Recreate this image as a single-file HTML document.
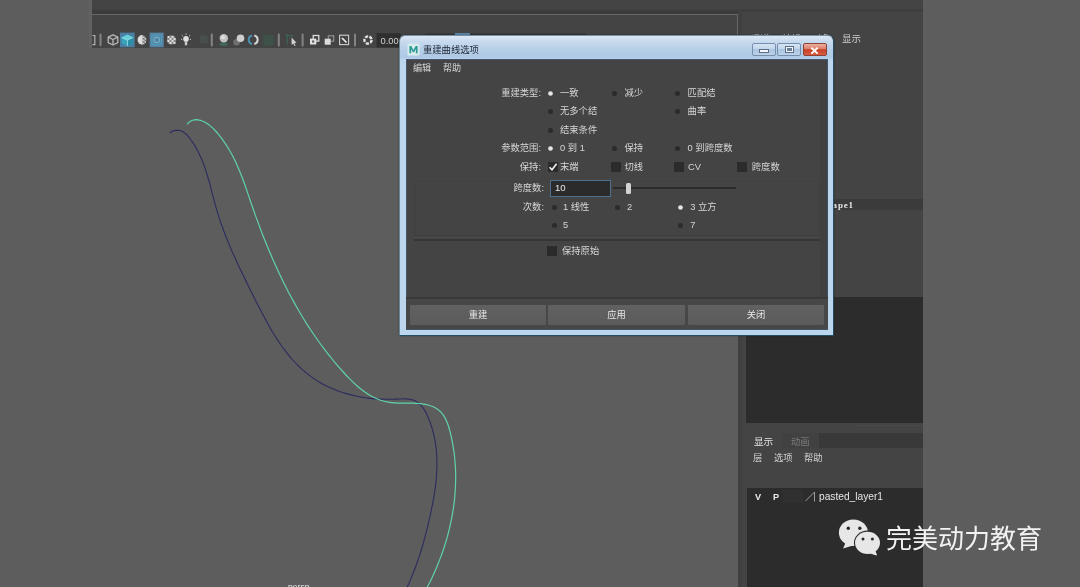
<!DOCTYPE html>
<html lang="zh-CN">
<head>
<meta charset="utf-8">
<title>重建曲线选项</title>
<style>
html,body{margin:0;padding:0;}
body{width:1080px;height:587px;overflow:hidden;background:#5d5d5d;position:relative;
  font-family:"Liberation Sans","Noto Sans CJK SC",sans-serif;font-size:9.3px;color:#d6d6d6;}
#stage{position:absolute;left:-10px;top:-10px;width:1100px;height:607px;background:#5d5d5d;filter:blur(0.4px);}
#in{position:absolute;left:10px;top:10px;width:1080px;height:587px;}
.a{position:absolute;}
.t{position:absolute;white-space:nowrap;line-height:12px;height:12px;}
.r{text-align:right;}
#topbar{left:92px;top:0;width:830.7px;height:11px;background:#444444;border-bottom:1px solid #3f3f3f;box-sizing:border-box;height:9.5px;}
#topline{left:92px;top:9.5px;width:646px;height:4.5px;background:linear-gradient(180deg,#414141 0,#3a3a3a 1.5px,#3c3c3c 100%);}
#tool{left:92px;top:14px;width:646px;height:34px;background:#444444;border-top:1.5px solid #676767;box-sizing:border-box;}
#rpanel{left:738px;top:9px;width:184.7px;height:578px;background:#444444;border-top:3px solid #3e3e3e;border-left:4px solid #404040;box-sizing:border-box;}
#vline{left:736.5px;top:14px;width:1.5px;height:30px;background:#676767;}
#rdark1{left:745.5px;top:297px;width:177.2px;height:125.5px;background:#2c2c2c;}
#rline{left:858px;top:424.6px;width:64.7px;height:1.6px;background:#4a4a4a;}
#lbox{left:783px;top:490px;width:20px;height:13px;background:#303030;}
#rdark2{left:747px;top:487.5px;width:175.7px;height:100px;background:#2c2c2c;}
#tabbar{left:782px;top:433px;width:140.7px;height:15px;background:#393939;}
#tab2{left:782px;top:433px;width:37px;height:15px;background:#414141;}
#lstrip{left:88.5px;top:0;width:3.5px;height:48px;background:#616161;}
#band{left:744px;top:198.5px;width:178.7px;height:11px;background:#3b3b3b;}
#dlg{left:399px;top:35px;width:435.3px;height:300.5px;box-sizing:border-box;border:1px solid #224f63;border-left-color:#6b8496;border-top-color:#7890a2;box-shadow:0 0 2px rgba(0,0,0,0.35);border-radius:6px 6px 1px 1px;
  background:linear-gradient(180deg,#dbe8f5 0,#c6d9ed 6px,#b8cfe8 13px,#aec9e5 21px,#bcd6ee 24px,#bcd6ee 100%);}
#dlgin{left:406.5px;top:59.5px;width:420.5px;height:269.5px;background:#444444;box-shadow:0 0 0 1px #43566c;}
.btn{position:absolute;top:305px;height:20px;background:linear-gradient(180deg,#616161,#5b5b5b);border-radius:1px;text-align:center;line-height:21px;color:#e6e6e6;}
.rd{position:absolute;width:5px;height:5px;border-radius:50%;background:#2b2b2b;}
.rd.on{background:#e6e6e6;transform:scale(0.94);}
.cb{position:absolute;width:10px;height:10px;background:#2b2b2b;}
.wb{position:absolute;top:43.2px;height:12.8px;box-sizing:border-box;border:1px solid #7590ae;border-radius:2px;background:linear-gradient(180deg,#d6e4f2 0,#c2d5ea 45%,#acc5e0 50%,#bcd2e9 100%);}
</style>
</head>
<body>
<div id="stage"><div id="in">
<div class="a" id="lstrip"></div>
<div class="a" id="topbar"></div>
<div class="a" id="topline"></div>
<div class="a" id="tool"></div>
<div class="a" id="rpanel"></div>
<div class="a" id="vline"></div>
<div class="a" id="band"></div>
<div class="a" id="rdark1"></div>
<div class="a" id="rdark2"></div>
<div class="a" id="rline"></div>
<div class="a" id="lbox"></div>
<div class="a" id="tabbar"></div>
<div class="a" id="tab2"></div>
<svg class="a" style="left:0;top:0" width="1080" height="587" viewBox="0 0 1080 587">
<path d="M169.7,133.0C170.2,132.8,171.4,131.8,172.3,131.3C173.2,130.9,174.2,130.6,175.1,130.4C176.0,130.2,177.0,130.2,177.9,130.2C178.8,130.3,179.7,130.4,180.6,130.7C181.4,130.9,182.2,131.3,183.0,131.7C183.7,132.2,184.4,132.7,185.1,133.3C185.8,133.8,186.5,134.5,187.2,135.1C187.8,135.8,188.4,136.5,189.0,137.3C189.6,138.0,190.2,138.8,190.7,139.5C191.3,140.3,191.9,141.1,192.4,141.9C192.9,142.7,193.4,143.4,193.9,144.2C194.4,145.0,194.9,145.8,195.4,146.6C195.9,147.4,195.9,147.2,196.8,149.1C197.7,150.9,199.7,154.8,201.0,157.7C202.3,160.7,203.5,163.7,204.5,166.7C205.6,169.8,206.6,172.9,207.5,176.0C208.5,179.1,209.3,182.2,210.2,185.3C211.0,188.5,211.8,191.6,212.6,194.8C213.5,197.9,214.3,201.0,215.1,204.1C216.0,207.3,216.8,210.3,217.8,213.4C218.7,216.5,219.7,219.5,220.7,222.5C221.8,225.5,222.9,228.5,224.0,231.5C225.1,234.5,226.2,237.4,227.4,240.3C228.6,243.3,229.8,246.2,231.1,249.1C232.3,252.0,233.6,254.9,234.9,257.8C236.2,260.7,237.6,263.6,238.9,266.5C240.3,269.4,241.7,272.3,243.1,275.1C244.5,278.0,245.9,280.9,247.3,283.8C248.7,286.7,250.2,289.6,251.6,292.5C253.1,295.4,254.5,298.4,256.0,301.3C257.5,304.2,259.0,307.2,260.5,310.1C262.0,313.0,263.5,315.9,265.1,318.8C266.7,321.7,268.2,324.6,269.9,327.4C271.5,330.2,273.2,333.0,274.9,335.8C276.6,338.5,278.4,341.3,280.2,343.9C282.1,346.6,283.9,349.2,285.9,351.7C287.8,354.2,289.8,356.7,291.9,359.0C294.0,361.4,296.1,363.7,298.4,365.9C300.6,368.1,302.9,370.2,305.3,372.2C307.7,374.2,310.2,376.1,312.8,377.9C315.3,379.6,318.0,381.3,320.8,382.9C323.5,384.4,326.3,385.9,329.2,387.2C332.1,388.5,335.1,389.8,338.1,390.9C341.1,392.0,344.2,393.0,347.3,393.9C350.4,394.8,353.6,395.5,356.8,396.2C360.0,396.9,363.3,397.4,366.5,397.9C369.8,398.3,373.1,398.7,376.4,398.9C379.7,399.2,383.0,399.3,386.4,399.3C389.7,399.4,393.1,399.2,396.3,399.1C399.6,399.0,403.0,398.6,406.0,398.9C409.1,399.1,412.0,399.4,414.6,400.6C417.2,401.7,419.5,403.6,421.5,405.8C423.5,408.0,425.1,411.0,426.7,413.9C428.2,416.9,429.4,420.2,430.5,423.4C431.6,426.6,432.6,429.8,433.4,433.0C434.2,436.3,434.8,439.5,435.3,442.7C435.8,445.9,436.2,449.1,436.5,452.3C436.7,455.5,436.9,458.7,436.9,461.9C437.0,465.1,436.9,468.3,436.7,471.5C436.6,474.7,436.3,477.9,436.0,481.1C435.7,484.3,435.3,487.4,434.8,490.6C434.4,493.8,433.8,497.0,433.3,500.1C432.7,503.3,432.1,506.4,431.4,509.6C430.8,512.7,430.1,515.9,429.4,519.0C428.7,522.1,428.0,525.3,427.2,528.4C426.4,531.5,425.6,534.6,424.8,537.7C424.0,540.8,423.1,543.9,422.2,547.0C421.3,550.0,420.3,553.1,419.3,556.1C418.3,559.2,417.3,562.2,416.2,565.2C415.1,568.3,413.9,571.3,412.7,574.3C411.5,577.2,410.3,580.2,409.0,583.2C407.6,586.1,405.5,590.5,404.8,592.0" fill="none" stroke="#2c2c60" stroke-width="1.1"/>
<path d="M187.2,124.4C187.5,124.0,188.5,122.7,189.3,122.1C190.0,121.4,190.8,120.9,191.7,120.6C192.5,120.2,193.3,120.0,194.2,119.8C195.0,119.7,195.9,119.7,196.8,119.7C197.7,119.8,198.6,120.0,199.4,120.2C200.3,120.4,201.2,120.7,202.0,121.0C202.9,121.3,203.7,121.7,204.6,122.1C205.4,122.6,206.2,123.0,207.0,123.5C207.7,124.0,208.5,124.6,209.3,125.1C210.0,125.7,210.7,126.3,211.5,126.9C212.2,127.6,212.9,128.2,213.6,128.9C214.2,129.6,214.9,130.3,215.6,131.0C216.2,131.7,216.2,131.5,217.5,133.2C218.9,134.9,221.7,138.4,223.6,141.1C225.5,143.8,227.3,146.5,228.9,149.3C230.6,152.1,232.1,154.9,233.6,157.8C235.0,160.6,236.4,163.5,237.6,166.5C238.9,169.4,240.1,172.3,241.3,175.3C242.5,178.3,243.6,181.3,244.7,184.3C245.7,187.3,246.8,190.3,247.8,193.4C248.9,196.4,249.9,199.4,250.9,202.5C252.0,205.5,253.0,208.5,254.1,211.6C255.2,214.6,256.2,217.6,257.4,220.6C258.5,223.6,259.6,226.7,260.7,229.7C261.9,232.7,263.0,235.7,264.2,238.7C265.4,241.6,266.6,244.6,267.8,247.6C269.1,250.6,270.3,253.5,271.6,256.5C272.9,259.4,274.2,262.4,275.5,265.3C276.8,268.3,278.2,271.2,279.5,274.1C280.9,277.0,282.3,279.9,283.7,282.8C285.2,285.7,286.6,288.5,288.1,291.4C289.6,294.2,291.1,297.1,292.7,299.9C294.2,302.7,295.8,305.5,297.4,308.3C299.0,311.1,300.6,313.9,302.3,316.7C304.0,319.4,305.7,322.2,307.4,324.9C309.2,327.6,311.0,330.3,312.8,333.0C314.6,335.7,316.4,338.3,318.3,341.0C320.2,343.6,322.1,346.2,324.1,348.8C326.0,351.4,328.0,354.0,330.1,356.5C332.1,359.1,334.2,361.6,336.3,364.1C338.4,366.6,340.6,369.1,342.8,371.5C345.0,374.0,347.2,376.4,349.5,378.7C351.8,381.1,354.2,383.4,356.6,385.5C359.0,387.6,361.5,389.6,364.1,391.5C366.6,393.3,369.3,395.0,372.0,396.5C374.8,397.9,377.6,399.2,380.5,400.2C383.5,401.2,386.5,401.9,389.7,402.4C392.8,402.9,396.1,403.0,399.4,403.1C402.7,403.2,406.1,403.1,409.4,403.1C412.8,403.2,416.2,403.2,419.5,403.5C422.7,403.9,426.1,404.3,429.0,405.2C432.0,406.1,434.9,407.2,437.3,408.9C439.7,410.5,441.7,412.7,443.4,415.1C445.1,417.5,446.3,420.4,447.5,423.3C448.7,426.2,449.5,429.5,450.3,432.7C451.1,435.8,451.8,439.1,452.4,442.3C453.0,445.6,453.5,448.8,454.0,452.0C454.4,455.3,454.8,458.5,455.0,461.8C455.3,465.0,455.5,468.2,455.6,471.5C455.7,474.7,455.7,478.0,455.6,481.2C455.6,484.5,455.4,487.7,455.2,490.9C455.0,494.1,454.7,497.4,454.4,500.6C454.0,503.8,453.6,507.0,453.1,510.2C452.6,513.4,452.0,516.6,451.4,519.7C450.7,522.9,450.0,526.1,449.3,529.2C448.5,532.3,447.7,535.5,446.8,538.6C445.9,541.7,445.0,544.7,444.0,547.8C442.9,550.9,441.9,553.9,440.8,556.9C439.6,559.9,438.5,562.9,437.2,565.9C436.0,568.8,434.7,571.8,433.4,574.7C432.1,577.6,430.7,580.5,429.3,583.3C427.8,586.2,425.6,590.4,424.9,591.8" fill="none" stroke="#5fd3a6" stroke-width="1.2"/>
</svg>
<div class="t" style="left:288px;top:580.5px;font-size:8.6px;color:#e8e8e8;">persp</div>
<div class="a" style="left:425px;top:32.5px;width:161px;height:4px;background:#3a3a3a;"></div>
<div class="a" style="left:455px;top:32.5px;width:15px;height:4px;background:#5a86a8;"></div>
<svg class="a" style="left:0;top:0" width="420" height="60" viewBox="0 0 420 60">
<!-- partial bracket icon -->
<path d="M92.5,35.5 H94.8 V44.6 H92.5" fill="none" stroke="#b4b4b4" stroke-width="1.2"/>
<!-- separators -->
<g stroke="#848484" stroke-width="2" stroke-linecap="round">
<path d="M100.5,34.6 V45.2"/><path d="M211.8,34.6 V45.6"/><path d="M278.8,34.6 V45.6"/><path d="M302.6,34.6 V45.6"/><path d="M355,34.6 V45.6"/>
</g>
<!-- wire cube -->
<g fill="none" stroke="#b4b4b4" stroke-width="1.35" stroke-linejoin="round">
<path d="M113,34.8 L117.8,37.1 V42.7 L113,45 L108.2,42.7 V37.1 Z"/><path d="M108.2,37.1 L113,39.5 L117.8,37.1 M113,39.5 V45"/>
</g>
<!-- shaded cube (active) -->
<rect x="120" y="32.6" width="14.7" height="14.7" fill="#4b7ea2"/>
<path d="M127.4,34.6 L133.2,37.4 V43.2 L127.4,46 L121.6,43.2 V37.4 Z" fill="#37a4b9"/>
<path d="M127.4,34.6 L133.2,37.4 L127.4,40.1 L121.6,37.4 Z" fill="#66cfda"/>
<path d="M127.4,40.1 L133.2,37.4 V43.2 L127.4,46 Z" fill="#2b8fa7"/>
<path d="M121.6,37.4 L127.4,40.1 L133.2,37.4 M127.4,40.1 V46" fill="none" stroke="#a6e3ea" stroke-width="0.8"/>
<!-- half sphere -->
<circle cx="141.7" cy="39.9" r="4.8" fill="#6f6f6f"/>
<path d="M142.6,35.1 A4.8,4.8 0 1 0 142.6,44.7 Z" fill="#dedede"/>
<g fill="#d0d0d0"><rect x="143" y="36.4" width="1.6" height="1.6"/><rect x="144.6" y="38" width="1.6" height="1.6"/><rect x="143" y="39.6" width="1.6" height="1.6"/><rect x="144.6" y="41.2" width="1.4" height="1.6"/><rect x="143" y="42.8" width="1.4" height="1.4"/></g>
<!-- textured (active) -->
<rect x="149.7" y="32.6" width="14" height="14.7" fill="#5783a8"/>
<rect x="151.9" y="35" width="9.6" height="9.8" rx="1.2" fill="none" stroke="#4ba6bb" stroke-width="1"/>
<rect x="154.1" y="37.3" width="5.2" height="5.2" rx="0.8" fill="none" stroke="#74c2cf" stroke-width="0.9"/>
<!-- checker circle -->
<circle cx="171.5" cy="40" r="4.7" fill="#868686"/>
<g fill="#dedede"><rect x="167.5" y="36" width="2" height="2"/><rect x="171.5" y="36" width="2" height="2"/><rect x="169.5" y="38" width="2" height="2"/><rect x="173.5" y="38" width="2" height="2"/><rect x="167.5" y="40" width="2" height="2"/><rect x="171.5" y="40" width="2" height="2"/><rect x="169.5" y="42" width="2" height="2"/><rect x="173.5" y="42" width="2" height="2"/></g>
<!-- light bulb -->
<circle cx="186" cy="38.9" r="2.8" fill="#e0e0e0"/>
<rect x="184.8" y="41.3" width="2.4" height="4" fill="#c8c8c8"/>
<g stroke="#d0d0d0" stroke-width="0.9"><path d="M186,33.4 V34.8"/><path d="M181.8,35.2 L183,36.3"/><path d="M190.2,35.2 L189,36.3"/><path d="M181,39.4 H182.2"/><path d="M191,39.4 H189.8"/></g>
<!-- dim icon -->
<rect x="199.6" y="35.6" width="8" height="7.6" fill="#48504c"/>
<!-- sphere w/ shadow -->
<ellipse cx="223.6" cy="44.2" rx="4.4" ry="1.8" fill="#3f6658"/>
<circle cx="223.8" cy="38.3" r="4.2" fill="#c2c2c2"/>
<circle cx="223" cy="37.2" r="2" fill="#dedede"/>
<!-- sphere 2 -->
<circle cx="236.6" cy="42.2" r="3.3" fill="#707070"/>
<circle cx="240.5" cy="38.2" r="3.8" fill="#cfcfcf"/>
<!-- ring: left blue, right white -->
<path d="M252.1,35.6 A4.3,4.3 0 0 0 252.1,44" fill="none" stroke="#4a8eae" stroke-width="2"/>
<path d="M254.3,35.6 A4.3,4.3 0 0 1 254.3,44" fill="none" stroke="#d6d6d6" stroke-width="2"/>
<!-- dim green -->
<rect x="263.2" y="34.6" width="10.4" height="11" fill="#3e5249"/>
<!-- select icon -->
<path d="M285.6,35.6 H293.6 M287.3,34 V44.5" fill="none" stroke="#3f6455" stroke-width="1.2"/>
<path d="M291.6,37.6 V45 L293.3,43.6 L294.5,46 L295.6,45.4 L294.4,43.1 L296.5,42.8 Z" fill="#d2d2d2"/>
<!-- overlapping squares 1 -->
<rect x="313.2" y="35.5" width="5.6" height="5.6" fill="none" stroke="#dcdcdc" stroke-width="1.3"/>
<rect x="310" y="38.6" width="6.3" height="5.9" fill="#e2e2e2"/>
<rect x="312.1" y="40.5" width="2.1" height="2.1" fill="#555"/>
<!-- overlapping squares 2 -->
<rect x="328.3" y="35.8" width="5.4" height="5.4" fill="none" stroke="#909090" stroke-width="1.2"/>
<rect x="324.7" y="38.7" width="6" height="6" fill="#dcdcdc"/>
<!-- square w/ diagonal -->
<rect x="339.6" y="35.2" width="9" height="9.4" fill="none" stroke="#cfcfcf" stroke-width="1.1"/>
<path d="M342,38 L346.5,42.5" stroke="#ececec" stroke-width="1.7"/>
<!-- gear ring -->
<circle cx="368" cy="40" r="3.6" fill="none" stroke="#e2e2e2" stroke-width="2.4" stroke-dasharray="3.2 1.3"/>
<!-- 0.00 -->
<rect x="376.5" y="33.2" width="24" height="14.3" fill="#2f2f2f"/>
<text x="380.6" y="43.6" font-family="Liberation Sans, sans-serif" font-size="9.3" fill="#d2d2d2">0.00</text>
</svg>

<div class="t" style="left:751px;top:32.5px;font-size:9.5px;color:#cfcfcf;">通道</div>
<div class="t" style="left:782px;top:32.5px;font-size:9.5px;color:#cfcfcf;">编辑</div>
<div class="t" style="left:812px;top:32.5px;font-size:9.5px;color:#cfcfcf;">对象</div>
<div class="t" style="left:842px;top:32.5px;font-size:9.5px;color:#cfcfcf;">显示</div>
<div class="t" style="left:832.6px;top:199px;font-family:'Liberation Serif',serif;font-size:9px;font-weight:bold;letter-spacing:0.8px;color:#e6e6e6;">ape1</div>
<div class="t" style="left:754px;top:436px;font-size:9.6px;color:#e6e6e6;">显示</div>
<div class="t" style="left:791px;top:436px;font-size:9.3px;color:#7a7a7a;">动画</div>
<div class="t" style="left:753px;top:452px;font-size:9.3px;color:#d2d2d2;">层</div>
<div class="t" style="left:774px;top:452px;font-size:9.3px;color:#d2d2d2;">选项</div>
<div class="t" style="left:804px;top:452px;font-size:9.3px;color:#d2d2d2;">帮助</div>
<div class="t" style="left:755px;top:491px;font-size:9.2px;font-weight:bold;color:#e8e8e8;">V</div>
<div class="t" style="left:773px;top:491px;font-size:9.2px;font-weight:bold;color:#e8e8e8;">P</div>
<svg class="a" style="left:804px;top:490px" width="14" height="13"><path d="M1.5,11 L10.5,2 L10.5,11.5" fill="none" stroke="#9a9a9a" stroke-width="1"/></svg>
<div class="t" style="left:819px;top:491px;font-size:10.2px;color:#e6e6e6;">pasted_layer1</div>
<svg class="a" style="left:836px;top:516px" width="48" height="42" viewBox="836 516 48 42">
<path d="M843.1,548.6 L845.6,542.6 L853,545.6 Z" fill="#e7e7e7"/>
<ellipse cx="853.4" cy="532.7" rx="14.5" ry="13.3" fill="#e7e7e7"/>
<path d="M877.1,555.7 L875.3,550 L868.6,553.6 Z" fill="#e7e7e7" stroke="#2c2c2c" stroke-width="0.6"/>
<ellipse cx="867.5" cy="542.8" rx="13.6" ry="12.2" fill="#2c2c2c"/>
<ellipse cx="867.5" cy="542.8" rx="12.5" ry="11.1" fill="#e7e7e7"/>
<path d="M876.9,555.3 L875.3,550.4 L869.4,553.3 Z" fill="#e7e7e7"/>
<circle cx="848.3" cy="528.3" r="1.7" fill="#2a2a2a"/><circle cx="859.8" cy="528.3" r="1.7" fill="#2a2a2a"/>
<circle cx="863" cy="538.9" r="1.5" fill="#2a2a2a"/><circle cx="872.4" cy="538.9" r="1.5" fill="#2a2a2a"/>
</svg>

<div class="t" style="left:886px;top:520px;height:38px;line-height:38px;font-size:26px;color:#f2f2f2;">完美动力教育</div>
<div class="a" id="dlg"></div>
<div class="a" id="dlgin"></div>
<svg class="a" style="left:407px;top:43px" width="13" height="13" viewBox="0 0 14 14"><rect x="0.5" y="0.5" width="13" height="13" rx="1.5" fill="#d7ecec"/><path d="M2.6,11 V3.2 H4.6 L7,7.6 L9.4,3.2 H11.4 V11 H9.5 V6.4 L7.6,9.9 H6.4 L4.5,6.4 V11 Z" fill="#2b9a94"/></svg>
<div class="t" style="left:423px;top:43.5px;font-size:9.3px;color:#1c2430;">重建曲线选项</div>
<div class="wb" style="left:752px;width:24px;"><div class="a" style="left:7.2px;top:5.6px;width:7.6px;height:2px;background:#f4f8fc;box-shadow:0 0 0 1px #5b6f86;"></div></div>
<div class="wb" style="left:777px;width:24px;"><div class="a" style="left:8px;top:3px;width:4.5px;height:3.2px;border:1px solid #f4f8fc;box-shadow:0 0 0 1px #5b6f86;background:#6b7f96;"></div></div>
<div class="wb" style="left:803px;width:24px;border-color:#8e4236;background:linear-gradient(180deg,#ebb0a2 0,#dd7c68 45%,#c93e24 52%,#d75e42 100%);"><svg class="a" style="left:6.2px;top:2.4px" width="9" height="7.4" viewBox="0 0 10 8"><path d="M1.5,0.8 L8.5,7.2 M8.5,0.8 L1.5,7.2" stroke="#ffffff" stroke-width="2.1" fill="none"/></svg></div>
<div class="t" style="left:413px;top:62px;font-size:9.1px;color:#d6d6d6;">编辑</div>
<div class="t" style="left:443px;top:62px;font-size:9.1px;color:#d6d6d6;">帮助</div>
<div class="a" style="left:414px;top:181px;width:406px;height:54.5px;box-sizing:border-box;border:1px solid rgba(0,0,0,0.07);border-top-color:rgba(0,0,0,0.03);border-bottom:1px solid rgba(0,0,0,0.10);"></div>
<div class="a" style="left:414px;top:235.5px;width:406px;height:3.7px;background:rgba(255,255,255,0.015);"></div>
<div class="a" style="left:414px;top:238.8px;width:406px;height:1.8px;background:rgba(0,0,0,0.2);"></div>
<div class="a" style="left:820px;top:80px;width:8px;height:218px;background:rgba(0,0,0,0.06);"></div>
<div class="a" style="left:406px;top:297px;width:422px;height:2px;background:#393939;"></div>
<div class="a" style="left:406px;top:299px;width:422px;height:30px;background:#474747;"></div>
<div class="t r" style="right:539.0px;top:86.7px;">重建类型:</div>
<div class="rd on" style="left:548.2px;top:90.5px;"></div>
<div class="t" style="left:560.0px;top:86.7px;">一致</div>
<div class="rd" style="left:611.8px;top:90.5px;"></div>
<div class="t" style="left:624.4px;top:86.7px;">减少</div>
<div class="rd" style="left:674.9px;top:90.5px;"></div>
<div class="t" style="left:687.6px;top:86.7px;">匹配结</div>
<div class="rd" style="left:548.2px;top:109.0px;"></div>
<div class="t" style="left:560.0px;top:105.2px;">无多个结</div>
<div class="rd" style="left:674.9px;top:109.0px;"></div>
<div class="t" style="left:687.6px;top:105.2px;">曲率</div>
<div class="rd" style="left:548.2px;top:127.5px;"></div>
<div class="t" style="left:560.0px;top:123.7px;">结束条件</div>
<div class="t r" style="right:539.0px;top:142.0px;">参数范围:</div>
<div class="rd on" style="left:548.2px;top:145.8px;"></div>
<div class="t" style="left:560.0px;top:142.0px;">0 到 1</div>
<div class="rd" style="left:611.8px;top:145.8px;"></div>
<div class="t" style="left:624.4px;top:142.0px;">保持</div>
<div class="rd" style="left:674.9px;top:145.8px;"></div>
<div class="t" style="left:687.6px;top:142.0px;">0 到跨度数</div>
<div class="t r" style="right:539.0px;top:160.7px;">保持:</div>
<div class="cb" style="left:547.5px;top:162.0px;"></div>
<svg class="a" style="left:547.5px;top:162.0px" width="10" height="10" viewBox="0 0 10 10"><path d="M1.6,5.2 L4,7.8 L8.6,1.8" fill="none" stroke="#f0f0f0" stroke-width="1.6"/></svg>
<div class="t" style="left:560.0px;top:160.7px;">末端</div>
<div class="cb" style="left:610.6px;top:162.0px;"></div>
<div class="t" style="left:624.4px;top:160.7px;">切线</div>
<div class="cb" style="left:673.7px;top:162.0px;"></div>
<div class="t" style="left:688.0px;top:160.7px;">CV</div>
<div class="cb" style="left:737.3px;top:162.0px;"></div>
<div class="t" style="left:751.8px;top:160.7px;">跨度数</div>
<div class="t r" style="right:536.0px;top:182.1px;">跨度数:</div>
<div class="a" style="left:549.5px;top:180.3px;width:61px;height:16.4px;box-sizing:border-box;border:1px solid #4f6f8f;background:#2b2b2b;"></div>
<div class="t" style="left:555px;top:182.2px;font-size:9.6px;color:#e8e8e8;">10</div>
<div class="a" style="left:613px;top:187px;width:123px;height:2px;background:#2b2b2b;"></div>
<div class="a" style="left:626.3px;top:182.6px;width:5.2px;height:11px;border-radius:1.5px;background:#d2d2d2;"></div>
<div class="t r" style="right:536.0px;top:201.1px;">次数:</div>
<div class="rd" style="left:551.7px;top:204.9px;"></div>
<div class="t" style="left:563.0px;top:201.1px;">1 线性</div>
<div class="rd" style="left:615.4px;top:204.9px;"></div>
<div class="t" style="left:627.0px;top:201.1px;">2</div>
<div class="rd on" style="left:678.4px;top:204.9px;"></div>
<div class="t" style="left:690.3px;top:201.1px;">3 立方</div>
<div class="rd" style="left:551.7px;top:223.2px;"></div>
<div class="t" style="left:563.0px;top:219.4px;">5</div>
<div class="rd" style="left:678.4px;top:223.2px;"></div>
<div class="t" style="left:690.3px;top:219.4px;">7</div>
<div class="cb" style="left:547.0px;top:246.0px;"></div>
<div class="t" style="left:562.0px;top:244.7px;">保持原始</div>
<div class="btn" style="left:410px;width:136px;">重建</div>
<div class="btn" style="left:548px;width:137px;">应用</div>
<div class="btn" style="left:688px;width:136px;">关闭</div>
</div></div>
</body>
</html>
